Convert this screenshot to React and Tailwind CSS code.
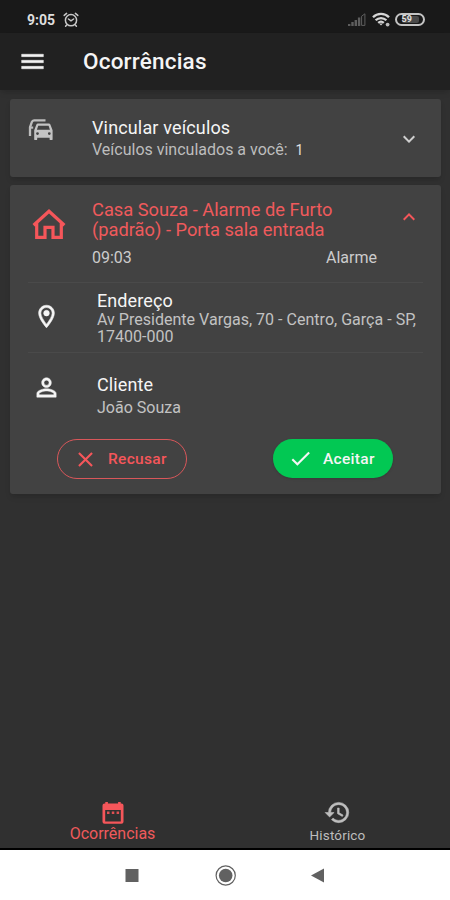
import React from "react";
import {
  MdMenu,
  MdExpandMore,
  MdExpandLess,
  MdOutlineLocationOn,
  MdPersonOutline,
  MdHistory,
  MdClose,
  MdCheck,
} from "react-icons/md";

function AlarmIcon() {
  return (
    <svg className="w-4 h-4" viewBox="0 0 16 16" fill="none" stroke="#c9c9c9" strokeWidth="1.5" strokeLinecap="round">
      <circle cx="8" cy="8.2" r="5.6" />
      <path d="M1.2 3.4 3.6 1.4M14.8 3.4 12.4 1.4M5.4 7 8 8.8 10.6 7M3.6 13l-1 1.2M12.4 13l1 1.2" />
    </svg>
  );
}

function SignalIcon() {
  return (
    <svg className="w-[18px] h-[13px]" viewBox="0 0 18 13" fill="#5e5e5e">
      <path d="M0 13v-2h2.4v2zM3.3 13V9h2.4v4zM6.6 13V7H9v6zM9.9 13V4.5h2.4V13z" />
      <path d="M13.6 12.4V3.2L16.9.8v11.6z" fill="none" stroke="#5e5e5e" />
    </svg>
  );
}

function WifiIcon() {
  return (
    <svg className="w-[18px] h-[15px]" viewBox="0 0 18 15" fill="none" stroke="#d6d6d6" strokeWidth="2.3">
      <path d="M1 5.3C5.4.8 12.6.8 17 5.3M3.6 8.3c3-3 7.8-3 10.8 0M6.2 10.9c1.6-1.5 4-1.5 5.6 0" />
      <path d="M7.2 11.4h3.6L9 13.4z" fill="#d6d6d6" stroke="none" />
      <circle cx="15.6" cy="12.6" r="1.9" fill="#bdbdbd" stroke="none" />
    </svg>
  );
}

function CarsIcon() {
  return (
    <svg className="w-[26px] h-[22px]" viewBox="0 0 26 22">
      <path d="M2 17V8.3L3.9 3Q4.4 1.3 6 1.3H17.5" fill="none" stroke="#bdbdbd" strokeWidth="2.3" />
      <path d="M1 8.6h4.2" stroke="#bdbdbd" strokeWidth="2.2" />
      <path
        fill="#c4c4c4"
        fillRule="evenodd"
        d="M10 4.4h10.8q1.2 0 1.6 1.2l2.2 5.6v9q0 .9-.9.9h-1.2q-.9 0-.9-.9v-1.4H9.2v1.4q0 .9-.9.9H7.1q-.9 0-.9-.9v-9l2.2-5.6q.4-1.2 1.6-1.2zM10.2 6.8 8.9 10.8h13L20.6 6.8zM9.5 13.2a1.4 1.4 0 1 0 0 2.8 1.4 1.4 0 0 0 0-2.8zM21.3 13.2a1.4 1.4 0 1 0 0 2.8 1.4 1.4 0 0 0 0-2.8z"
      />
    </svg>
  );
}

function HouseIcon() {
  return (
    <svg className="w-[34px] h-8" viewBox="0 0 34 32" fill="none" stroke="#f5565a" strokeWidth="3.2">
      <path d="M1.6 17.2 17 3.2 32.4 17.2M4.7 15v14.3h8.3V19.3h8v10h8.3V15" />
    </svg>
  );
}

function CalendarIcon() {
  return (
    <svg className="w-[22px] h-[22px]" viewBox="0 0 22 22">
      <path
        fill="#f5565a"
        fillRule="evenodd"
        d="M3.3 0h2.6v1.5h10.2V0h2.6v1.5h.8q2 0 2 2v16.3q0 2-2 2h-17q-2 0-2-2V3.5q0-2 2-2h.8zM3.2 8v11.4h15.6V8z"
      />
      <path fill="#e05053" d="M5 9.5h2.5V12H5zM9.8 9.5h2.5V12H9.8zM14.6 9.5h2.5V12h-2.5z" />
    </svg>
  );
}

function StatusBar() {
  return (
    <div className="h-[33px] shrink-0 bg-[#191919] flex items-center justify-between pl-[27px] pr-[25px] pt-[6px]">
      <div className="flex items-center gap-[6px]">
        <span className="text-[14px] font-bold leading-4 text-[#dedede] w-[30px] whitespace-nowrap">9:05</span>
        <AlarmIcon />
      </div>
      <div className="flex items-center">
        <SignalIcon />
        <div className="ml-[6px]"><WifiIcon /></div>
        <div className="ml-[5px] w-[30px] h-[13px] rounded-full border-2 border-[#c4c4c4] flex items-center justify-center">
          <div className="w-[17px] h-[7px] rounded-[2px] bg-[#4a4a4a] flex items-center">
            <span className="text-[9px] leading-[7px] font-bold text-[#e0e0e0]">59</span>
          </div>
        </div>
      </div>
    </div>
  );
}

export default function App() {
  return (
    <div className="w-[450px] h-[900px] flex flex-col overflow-hidden bg-[#303030] font-['Roboto',sans-serif]">
      <StatusBar />

      {/* App bar */}
      <header className="h-[57px] shrink-0 bg-[#212121] flex items-center pl-[18px] shadow-md">
        <MdMenu className="w-[29px] h-[29px] text-[#f2f2f2] [&>[fill=none]]:stroke-none" strokeWidth="0.4" />
        <h1 className="ml-9 pb-[2px] text-[22.5px] font-medium leading-7 text-[#f5f5f5] tracking-[0.2px]">Ocorrências</h1>
      </header>

      <main className="flex-1 pt-[9px] pl-[10px] pr-[9px] flex flex-col gap-2">
        {/* Vehicles */}
        <section className="h-[78px] bg-[#424242] rounded-[3px] shadow-md flex">
          <div className="w-[82px] pl-[18px] pt-[20px]">
            <CarsIcon />
          </div>
          <div className="flex-1 pt-[19px]">
            <p className="text-[18px] leading-5 text-[#f5f5f5] tracking-[0.15px]">Vincular veículos</p>
            <p className="mt-[2px] text-[16px] leading-5 text-[#bdbdbd] whitespace-nowrap">
              Veículos vinculados a você:<span className="ml-[8px] text-[14px] text-[#e0e0e0]">1</span>
            </p>
          </div>
          <MdExpandMore className="w-6 h-6 mt-[28px] mr-5 text-[#cfcfcf]" />
        </section>

        {/* Occurrence */}
        <section className="h-[309px] bg-[#424242] rounded-[3px] shadow-md flex flex-col">
          <div className="h-[97px] flex">
            <div className="w-[82px] pl-[22px] pt-[23px]">
              <HouseIcon />
            </div>
            <div className="flex-1 pt-[15px]">
              <h2 className="text-[18.3px] leading-5 text-[#ef5a5c] whitespace-nowrap">
                Casa Souza - Alarme de Furto
                <br />
                (padrão) - Porta sala entrada
              </h2>
              <div className="mt-2 pr-5 flex justify-between text-[16px] leading-5 text-[#cccccc]">
                <span>09:03</span>
                <span>Alarme</span>
              </div>
            </div>
            <MdExpandLess className="w-6 h-6 mt-[20px] mr-5 text-[#f5565a]" />
          </div>

          <div className="h-[71px] ml-[18px] mr-[18px] border-t border-b border-[#4a4a4a] flex">
            <div className="w-[69px] pl-[5px] pt-[20px]">
              <MdOutlineLocationOn className="w-[27px] h-[27px] text-[#f5f5f5] [&>[fill=none]]:stroke-none" strokeWidth="0.5" />
            </div>
            <div className="pt-[8px] whitespace-nowrap">
              <p className="text-[18px] leading-5 text-[#f5f5f5] tracking-[0.1px]">Endereço</p>
              <p className="text-[16px] leading-[17px] text-[#c2c2c2] tracking-[0.02px]">
                Av Presidente Vargas, 70 - Centro, Garça - SP,
                <br />
                17400-000
              </p>
            </div>
          </div>

          <div className="h-[86px] ml-[18px] flex">
            <div className="w-[69px] pl-[4px] pt-[20px]">
              <MdPersonOutline className="w-[29px] h-[29px] text-[#f5f5f5] [&>[fill=none]]:stroke-none" strokeWidth="0.4" />
            </div>
            <div className="pt-[22px]">
              <p className="text-[18px] leading-5 text-[#f5f5f5] tracking-[0.1px]">Cliente</p>
              <p className="mt-[3px] text-[16px] leading-5 text-[#c2c2c2]">João Souza</p>
            </div>
          </div>

          <div className="flex justify-between pl-[47px] pr-[48px]">
            <button className="w-[130px] h-10 rounded-full border border-[#d9575a] flex items-center pl-[15px] text-[#f5565a]">
              <MdClose className="w-[25px] h-[25px]" />
              <span className="ml-[10px] pt-[2px] text-[15.5px] font-medium tracking-[0.3px]">Recusar</span>
            </button>
            <button className="w-[120px] h-[39px] rounded-full bg-[#02c853] shadow flex items-center pl-[15px] text-[#f5f5f5]">
              <MdCheck className="w-[25px] h-[25px]" />
              <span className="ml-[10px] pt-[2px] text-[15.5px] font-medium tracking-[0.3px]">Aceitar</span>
            </button>
          </div>
        </section>
      </main>

      {/* Bottom tabs */}
      <nav className="h-[60px] shrink-0 flex border-b-2 border-black">
        <div className="flex-1 flex flex-col items-center pt-[12px] text-[#ef5a5c]">
          <CalendarIcon />
          <span className="text-[16px] leading-5">Ocorrências</span>
        </div>
        <div className="flex-1 flex flex-col items-center pt-[9px] text-[#bdbdbd]">
          <MdHistory className="w-[27px] h-[27px] [&>[fill=none]]:stroke-none" strokeWidth="0.5" />
          <span className="text-[13.5px] leading-[18px] tracking-[0.15px]">Histórico</span>
        </div>
      </nav>

      {/* System navigation */}
      <div className="h-[50px] shrink-0 bg-white">
        <svg className="w-[450px] h-[50px]" viewBox="0 0 450 50" fill="#616161">
          <rect x="125.5" y="19" width="13" height="13" />
          <circle cx="225.7" cy="25.5" r="9.6" fill="none" stroke="#616161" strokeWidth="1.2" />
          <circle cx="225.7" cy="25.5" r="6.8" />
          <path d="M311 25.5 324 18.5v14z" />
        </svg>
      </div>
    </div>
  );
}
